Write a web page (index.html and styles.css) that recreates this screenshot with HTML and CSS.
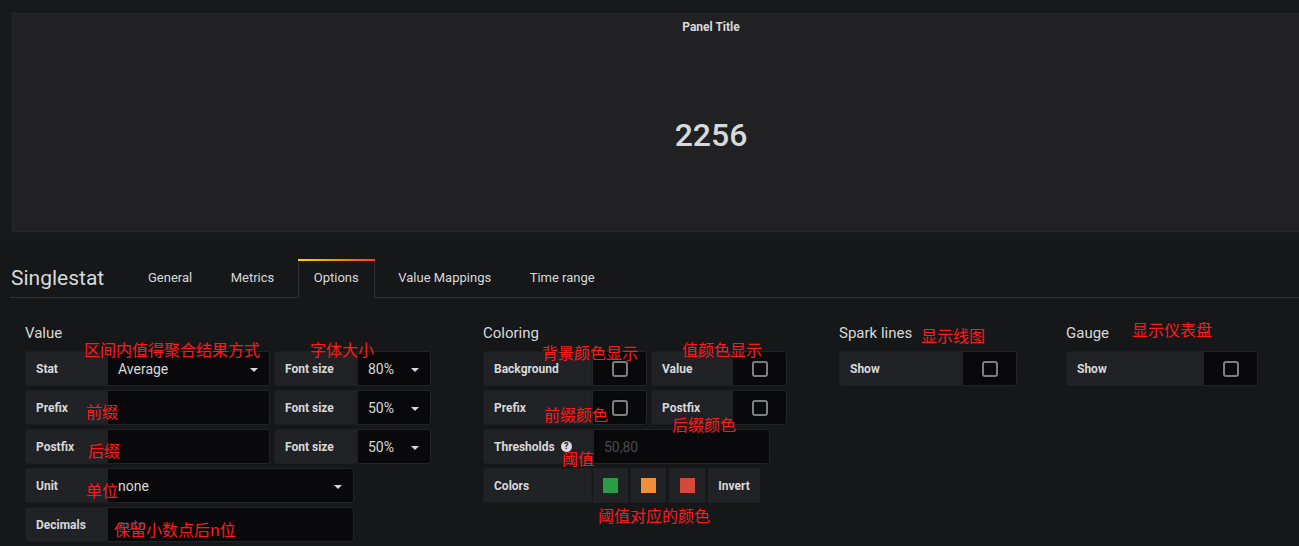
FILE: index.html
```html
<!DOCTYPE html>
<html lang="zh-CN">
<head>
	<meta charset="UTF-8">
	<title>Singlestat options</title>
	<link rel="stylesheet" href="styles.css">
</head>
<body>
	<div class="dashboard">
		<div class="panel">
			<div class="panel-title">Panel Title</div>
			<div class="panel-value">2256</div>
		</div>
	</div>

	<div class="editor">
		<div class="tabs">
			<div class="tabs-title">Singlestat</div>
			<div class="tab">General</div>
			<div class="tab">Metrics</div>
			<div class="tab active">Options</div>
			<div class="tab">Value Mappings</div>
			<div class="tab">Time range</div>
		</div>

		<div class="options">
			<section class="group value">
				<h5>Value</h5>
				<div class="form">
					<div class="label w82">Stat</div>
					<div class="input w163 select">Average</div>
					<div class="label w83">Font size</div>
					<div class="input w74 select">80%</div>
				</div>
				<div class="form">
					<div class="label w82">Prefix</div>
					<div class="input w163"></div>
					<div class="label w83">Font size</div>
					<div class="input w74 select">50%</div>
				</div>
				<div class="form">
					<div class="label w82">Postfix</div>
					<div class="input w163"></div>
					<div class="label w83">Font size</div>
					<div class="input w74 select">50%</div>
				</div>
				<div class="form">
					<div class="label w82">Unit</div>
					<div class="input w247 select">none</div>
				</div>
				<div class="form">
					<div class="label w82">Decimals</div>
					<div class="input w247 placeholder">auto</div>
				</div>
			</section>

			<section class="group coloring">
				<h5>Coloring</h5>
				<div class="form">
					<div class="label w109">Background</div>
					<div class="check"><span class="box"></span></div>
					<div class="label w81">Value</div>
					<div class="check"><span class="box"></span></div>
				</div>
				<div class="form">
					<div class="label w109">Prefix</div>
					<div class="check"><span class="box"></span></div>
					<div class="label w81">Postfix</div>
					<div class="check"><span class="box"></span></div>
				</div>
				<div class="form">
					<div class="label w110">Thresholds <span class="help">?</span></div>
					<div class="input w177 placeholder">50,80</div>
				</div>
				<div class="form colors">
					<div class="label w109">Colors</div>
					<div class="cell first w35"><span class="swatch green"></span></div>
					<div class="cell w35"><span class="swatch orange"></span></div>
					<div class="cell w36"><span class="swatch red"></span></div>
					<div class="cell w52">Invert</div>
				</div>
			</section>

			<section class="group spark">
				<h5>Spark lines</h5>
				<div class="form">
					<div class="label w123">Show</div>
					<div class="check"><span class="box"></span></div>
				</div>
			</section>

			<section class="group gauge">
				<h5>Gauge</h5>
				<div class="form">
					<div class="label w137">Show</div>
					<div class="check"><span class="box"></span></div>
				</div>
			</section>
		</div>
	</div>

	<!-- annotations -->
	<span class="note" style="left:84px;top:341px">区间内值得聚合结果方式</span>
	<span class="note" style="left:310px;top:341px">字体大小</span>
	<span class="note" style="left:86px;top:403px">前缀</span>
	<span class="note" style="left:88px;top:442px">后缀</span>
	<span class="note" style="left:86px;top:482px">单位</span>
	<span class="note" style="left:114px;top:521px">保留小数点后n位</span>
	<span class="note" style="left:542px;top:344px">背景颜色显示</span>
	<span class="note" style="left:682px;top:341px">值颜色显示</span>
	<span class="note" style="left:544px;top:406px">前缀颜色</span>
	<span class="note" style="left:672px;top:416px">后缀颜色</span>
	<span class="note" style="left:562px;top:450px">阈值</span>
	<span class="note" style="left:598px;top:507px">阈值对应的颜色</span>
	<span class="note" style="left:921px;top:327px">显示线图</span>
	<span class="note" style="left:1132px;top:321px">显示仪表盘</span>
</body>
</html>
```

FILE: styles.css
```css
html, body {
	margin: 0;
	padding: 0;
	height: 100%;
	overflow: hidden;
}
body {
	background-color: #161719;
	color: #d8d9da;
	font-family: Roboto, "Noto Sans", "Liberation Sans", sans-serif;
	position: relative;
}

/* dashboard */
.dashboard {
	background-color: #18191b;
	box-sizing: border-box;
	height: 240px;
	padding: 13px 0 0 12px;
}
.panel {
	background-color: #212124;
	border: 1px solid #28292c;
	box-sizing: border-box;
	height: 219px;
	width: 1398px;
	text-align: center;
}
.panel-title {
	font-size: 12px;
	font-weight: 700;
	line-height: 14px;
	padding-top: 6px;
}
.panel-value {
	font-size: 32px;
	font-weight: 500;
	line-height: 38px;
	margin-top: 82px;
}

/* tabs */
.editor {
	padding-top: 19px;
}
.tabs {
	align-items: flex-end;
	border-bottom: 1px solid #2f3033;
	display: flex;
	height: 38px;
	margin-left: 10px;
}
.tabs-title {
	font-size: 21px;
	line-height: 38px;
	padding-left: 1px;
	width: 122px;
}
.tab {
	font-size: 13px;
	line-height: 38px;
	margin-right: 8.5px;
	padding: 0 15px;
}
.tab.active {
	background-color: #161719;
	border-left: 1px solid #2f3033;
	border-right: 1px solid #2f3033;
	line-height: 34px;
	margin-bottom: -1px;
	padding: 2px 15px 3px 15px;
	position: relative;
}
.tab.active:before {
	background: linear-gradient(90deg, #ffd500, #ff4400);
	content: "";
	height: 2px;
	left: -1px;
	position: absolute;
	right: -1px;
	top: 0;
}

/* options */
.options {
	display: flex;
	padding: 26px 0 0 25px;
}
.group h5 {
	font-size: 15px;
	font-weight: 400;
	line-height: 18px;
	margin: 0 0 9px 0;
}
.group.value { width: 458px; }
.group.coloring { width: 356px; }
.group.spark { width: 227px; }

.form {
	display: flex;
	gap: 4px;
	height: 35px;
	margin-bottom: 4px;
}
.form .label + .input,
.form .label + .check {
	margin-left: -4px;
}
.label {
	align-items: center;
	background-color: #212226;
	border: 1px solid #1d1e21;
	border-radius: 3px 0 0 3px;
	box-sizing: border-box;
	display: flex;
	font-size: 12px;
	font-weight: 700;
	padding-left: 10px;
}
.input {
	align-items: center;
	background-color: #09090b;
	border: 1px solid #222326;
	border-radius: 0 3px 3px 0;
	box-sizing: border-box;
	display: flex;
	font-size: 14px;
	padding-left: 10px;
	position: relative;
}
.input.placeholder {
	color: #4a4b4f;
}
.input.select:after {
	border-left: 4px solid transparent;
	border-right: 4px solid transparent;
	border-top: 4px solid #d8d9da;
	content: "";
	position: absolute;
	right: 11px;
	top: 16px;
}
.check {
	align-items: center;
	background-color: #09090b;
	border: 1px solid #222326;
	border-radius: 0 3px 3px 0;
	box-sizing: border-box;
	display: flex;
	justify-content: center;
	width: 55px;
}
.check .box {
	border: 2px solid #7d7e81;
	border-radius: 3px;
	box-shadow: 0 0 3px rgba(0,0,0,.8);
	box-sizing: border-box;
	height: 16px;
	width: 16px;
}
.help {
	background-color: #d8d9da;
	border-radius: 50%;
	color: #212226;
	display: inline-block;
	font-size: 9px;
	font-weight: 700;
	height: 11px;
	line-height: 11px;
	margin-left: 6px;
	text-align: center;
	width: 11px;
}
.form.colors {
	gap: 3px;
}
.form.colors .cell.first {
	margin-left: -2px;
}
.cell {
	align-items: center;
	background-color: #212226;
	box-sizing: border-box;
	display: flex;
	font-size: 12px;
	font-weight: 700;
	justify-content: center;
}
.swatch {
	height: 15px;
	width: 15px;
}
.swatch.green { background-color: #2a9c46; }
.swatch.orange { background-color: #ef8f3a; }
.swatch.red { background-color: #d44a3a; }

.w35 { width: 35px; }
.w36 { width: 36px; }
.w52 { width: 52px; }
.w74 { width: 74px; }
.w81 { width: 81px; }
.w82 { width: 82px; }
.w83 { width: 83px; }
.w109 { width: 109px; }
.w110 { width: 110px; }
.w123 { width: 123px; }
.w137 { width: 137px; }
.w163 { width: 163px; }
.w177 { width: 177px; }
.w247 { width: 247px; }

/* red notes on top of the form */
.note {
	color: #ff1a1a;
	font-family: "Noto Sans CJK SC", "Noto Sans", sans-serif;
	font-size: 16px;
	line-height: 16px;
	position: absolute;
	white-space: nowrap;
}
```
